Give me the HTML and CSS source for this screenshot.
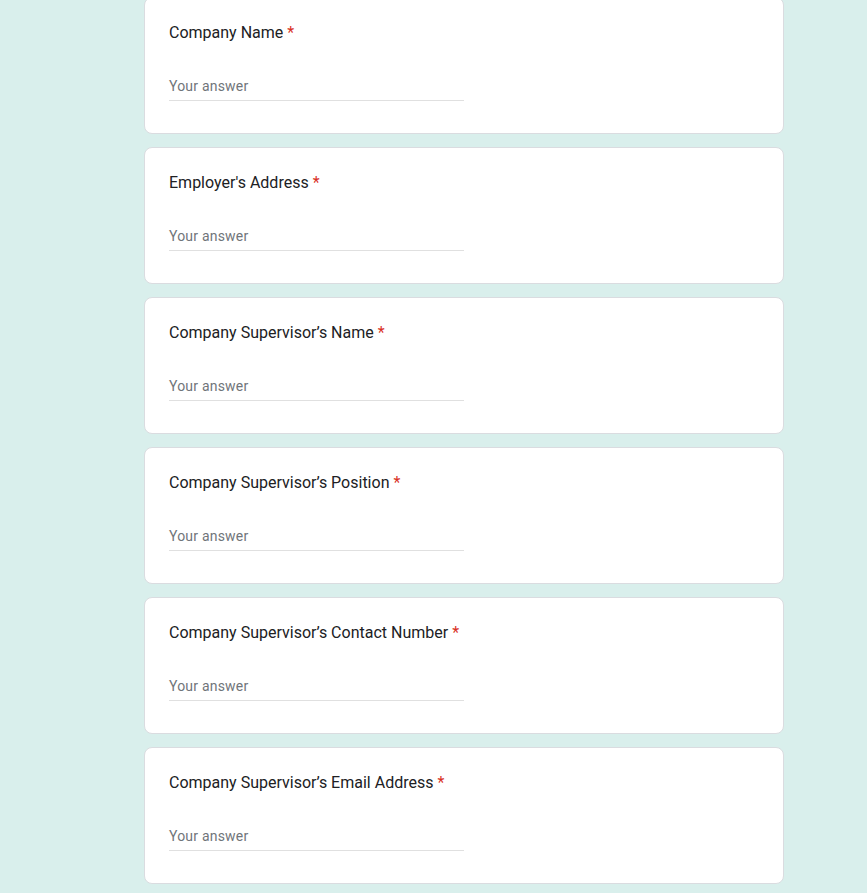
FILE: index.html
```html
<!DOCTYPE html>
<html lang="en">
<head>
<meta charset="utf-8">
<title>Form</title>
<link rel="stylesheet" href="styles.css">
</head>
<body>
<div class="form">
  <div class="card">
    <div class="title">Company Name <span class="req">*</span></div>
    <div class="answer"><span class="ph">Your answer</span></div>
  </div>
  <div class="card">
    <div class="title">Employer's Address <span class="req">*</span></div>
    <div class="answer"><span class="ph">Your answer</span></div>
  </div>
  <div class="card">
    <div class="title">Company Supervisor’s Name <span class="req">*</span></div>
    <div class="answer"><span class="ph">Your answer</span></div>
  </div>
  <div class="card">
    <div class="title">Company Supervisor’s Position <span class="req">*</span></div>
    <div class="answer"><span class="ph">Your answer</span></div>
  </div>
  <div class="card">
    <div class="title">Company Supervisor’s Contact Number <span class="req">*</span></div>
    <div class="answer"><span class="ph">Your answer</span></div>
  </div>
  <div class="card">
    <div class="title">Company Supervisor’s Email Address <span class="req">*</span></div>
    <div class="answer"><span class="ph">Your answer</span></div>
  </div>
</div>
</body>
</html>
```

FILE: styles.css
```css
html, body {
  margin: 0;
  padding: 0;
  background: #d9efec;
  font-family: Roboto, "Liberation Sans", Arial, sans-serif;
  overflow: hidden;
}
.form {
  margin: -3px 0 0 144px;
  width: 640px;
  display: flex;
  flex-direction: column;
  gap: 13px;
}
.card {
  background: #fff;
  border: 1px solid #dadce0;
  border-radius: 8px;
  padding: 23px 24px 32px;
}
.title {
  font-size: 16px;
  line-height: 24px;
  color: #202124;
}
.req {
  color: #d93025;
}
.answer {
  margin-top: 31px;
  width: 50%;
  padding-bottom: 4px;
  border-bottom: 1px solid #e0e0e0;
  font-size: 14px;
  line-height: 20px;
}
.ph {
  color: #70757a;
  letter-spacing: 0.2px;
}
```
